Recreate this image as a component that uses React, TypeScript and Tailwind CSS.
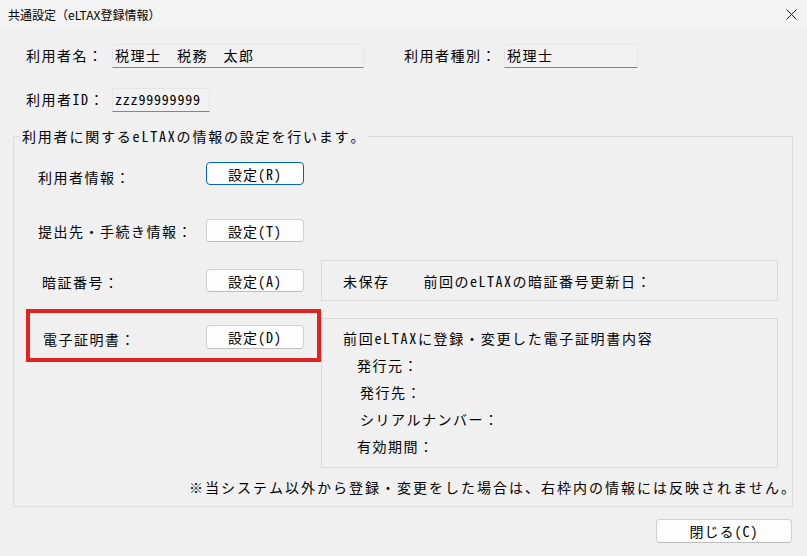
import React from 'react';

const FONT = '"Noto Sans Mono CJK JP", "Noto Sans CJK JP", "Noto Sans", sans-serif';

function ReadOnlyBox({ value, width, tight }: { value: string; width: string; tight?: boolean }) {
  return (
    <div
      className={`${width} h-[24px] pl-[2px] leading-[20px] bg-[#f1f1f1] border border-[#e6e6e6] border-b-[#858585] whitespace-pre ${
        tight ? 'tracking-[0.8px]' : 'tracking-[1.5px]'
      }`}
    >
      {value}
    </div>
  );
}

function WinButton({ label, focused, className = '' }: { label: string; focused?: boolean; className?: string }) {
  return (
    <button
      className={`h-[23px] rounded-[4px] bg-[#fdfdfd] text-[14px] leading-none tracking-[1px] text-black flex items-center justify-center ${
        focused ? 'border border-[#0067c0]' : 'border border-[#d0d0d0] border-b-[#bdbdbd]'
      } ${className}`}
    >
      {label}
    </button>
  );
}

export default function App() {
  return (
    <div
      className="w-[807px] h-[556px] bg-[#f0f0f0] text-black text-[14px] tracking-[1.5px] overflow-hidden"
      style={{ fontFamily: FONT }}
    >
      {/* Title bar */}
      <div className="h-[30px] bg-[#f3f3f3] flex items-center justify-between pl-[8px] pr-[10px]">
        <span className="text-[12px] tracking-[0px]" style={{ fontFamily: '"Noto Sans CJK JP", sans-serif' }}>
          共通設定（eLTAX登録情報）
        </span>
        <svg width="11" height="11" viewBox="0 0 11 11" className="mt-[-2px]">
          <path d="M0.5 0.5 L10.5 10.5 M10.5 0.5 L0.5 10.5" stroke="#1a1a1a" strokeWidth="1" fill="none" />
        </svg>
      </div>

      {/* User fields */}
      <div className="pt-[14px]">
        <div className="flex items-start h-[24px]">
          <span className="w-[112px] pl-[26px] leading-[22px]">利用者名：</span>
          <ReadOnlyBox value="税理士　税務　太郎" width="w-[252px]" />
          <span className="w-[140px] pl-[40px] leading-[22px]">利用者種別：</span>
          <ReadOnlyBox value="税理士" width="w-[134px]" />
        </div>
        <div className="flex items-start h-[24px] mt-[20px]">
          <span className="w-[112px] pl-[26px] leading-[22px]">利用者ID：</span>
          <ReadOnlyBox value="zzz99999999" width="w-[98px]" tight />
        </div>
      </div>

      {/* eLTAX settings group */}
      <div className="relative ml-[13px] mt-[24px] w-[780px] h-[371px] border border-[#dcdcdc]">
        <span className="absolute left-[6px] top-[-11px] px-[2px] bg-[#f0f0f0] leading-[20px] tracking-[1.8px]">
          利用者に関するeLTAXの情報の設定を行います。
        </span>

        <div className="pt-[25px]">
          <div className="flex items-center h-[23px]">
            <span className="w-[192px] pl-[24px] pt-[8px]">利用者情報：</span>
            <WinButton label="設定(R)" focused className="w-[98px]" />
          </div>

          <div className="flex items-center h-[23px] mt-[34px]">
            <span className="w-[192px] pl-[24px] pt-[2px]">提出先・手続き情報：</span>
            <WinButton label="設定(T)" className="w-[98px]" />
          </div>

          <div className="flex h-[41px] mt-[18px]">
            <div className="w-[307px] flex items-center">
              <span className="w-[192px] pl-[28px] pt-[3px]">暗証番号：</span>
              <WinButton label="設定(A)" className="w-[98px]" />
            </div>
            <div className="w-[457px] border border-[#d9d9d9] flex items-center pl-[21px] pt-[2px]">
              <span>未保存</span>
              <span className="ml-[34px]">前回のeLTAXの暗証番号更新日：</span>
            </div>
          </div>

          <div className="flex h-[150px] mt-[17px]">
            <div className="w-[307px] flex items-start pt-[7px]">
              <span className="w-[192px] pl-[29px] leading-[24px] pt-[2px]">電子証明書：</span>
              <WinButton label="設定(D)" className="w-[98px] h-[24px]" />
            </div>
            <div className="w-[457px] border border-[#d9d9d9] pl-[21px] pt-[6px]">
              <div className="h-[27px] leading-[27px] tracking-[1.7px]">前回eLTAXに登録・変更した電子証明書内容</div>
              <div className="h-[27px] leading-[27px] pl-[14px]">発行元：</div>
              <div className="h-[27px] leading-[27px] pl-[17px]">発行先：</div>
              <div className="h-[27px] leading-[27px] pl-[17px]">シリアルナンバー：</div>
              <div className="h-[27px] leading-[27px] pl-[14px]">有効期間：</div>
            </div>
          </div>

          <div className="flex justify-end mt-[9px] mr-[-5px] h-[20px] leading-[20px] whitespace-nowrap tracking-[2px]">
            ※当システム以外から登録・変更をした場合は、右枠内の情報には反映されません。
          </div>
        </div>

        {/* highlight around the certificate row */}
        <div className="absolute left-[12px] top-[172px] w-[295px] h-[53px] border-[4px] border-[#e52222]" />
      </div>

      {/* Footer */}
      <div className="flex justify-end pr-[15px] mt-[12px]">
        <WinButton label="閉じる(C)" className="w-[136px] h-[24px]" />
      </div>
    </div>
  );
}
